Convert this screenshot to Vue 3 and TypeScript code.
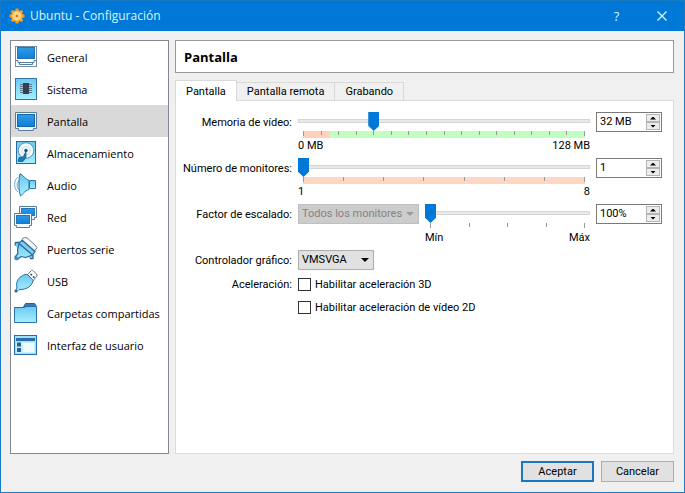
<script setup lang="ts">
import { ref } from 'vue'

interface Section {
  id: string
  label: string
}

const sections: Section[] = [
  { id: 'general', label: 'General' },
  { id: 'system', label: 'Sistema' },
  { id: 'display', label: 'Pantalla' },
  { id: 'storage', label: 'Almacenamiento' },
  { id: 'audio', label: 'Audio' },
  { id: 'network', label: 'Red' },
  { id: 'serial', label: 'Puertos serie' },
  { id: 'usb', label: 'USB' },
  { id: 'folders', label: 'Carpetas compartidas' },
  { id: 'ui', label: 'Interfaz de usuario' },
]

const tabs = ['Pantalla', 'Pantalla remota', 'Grabando']

const activeSection = ref('display')
const activeTab = ref('Pantalla')
const memory = ref(32)
const monitors = ref(1)
const scale = ref(100)
const controller = ref('VMSVGA')
const accel3d = ref(false)
const accel2d = ref(false)

function clamp(value: number, min: number, max: number): number {
  return Math.min(max, Math.max(min, value))
}
</script>

<template>
  <div class="window">
    <header class="titlebar">
      <svg class="gear" viewBox="0 0 16 16" aria-hidden="true">
        <g fill="#f59a23">
          <circle cx="8" cy="8" r="5.8" />
          <rect v-for="n in 4" :key="n" x="6.3" y="0.4" width="3.4" height="15.2" rx="1.4" :transform="`rotate(${n * 45} 8 8)`" />
        </g>
        <circle cx="8" cy="8" r="5" fill="#ffc65c" />
        <path d="M8 4v8M4 8h8M5.2 5.2l5.6 5.6M10.8 5.2l-5.6 5.6" stroke="#fff0c4" stroke-width="1" />
        <circle cx="8" cy="8" r="1.5" fill="#e8791a" />
      </svg>
      <h1>Ubuntu - Configuración</h1>
      <button type="button" class="caption" aria-label="Ayuda">?</button>
      <button type="button" class="caption" aria-label="Cerrar">
        <svg viewBox="0 0 10 10" width="10" height="10"><path d="M0.5 0.5l9 9M9.5 0.5l-9 9" stroke="#d8f6ff" stroke-width="1.3" /></svg>
      </button>
    </header>

    <div class="body">
      <nav class="sidebar">
        <button
          v-for="s in sections"
          :key="s.id"
          type="button"
          class="item"
          :class="{ selected: s.id === activeSection }"
          @click="activeSection = s.id"
        >
          <svg class="icon" viewBox="0 0 24 24" aria-hidden="true">
            <g v-if="s.id === 'general'">
              <rect x="1.5" y="1.5" width="21" height="20" fill="#fff" stroke="#6f8da5" />
              <rect x="3.5" y="2.5" width="17" height="11" fill="url(#screen)" stroke="#2375ba" />
              <path d="M2 15.5h2v2h16v-2h2M5.5 17.5v2h13v-2" fill="none" stroke="#587d9b" />
            </g>
            <g v-else-if="s.id === 'system'">
              <rect x="1.5" y="1.5" width="21" height="21" fill="url(#cyan)" stroke="#3276a8" />
              <path d="M6 7.5h12M6 9.5h12M6 11.5h12M6 13.5h12M6 15.5h12" stroke="#54788f" />
              <rect x="9" y="6" width="6" height="11" fill="#34424f" />
            </g>
            <g v-else-if="s.id === 'display'">
              <path d="M1.5 3.5h21v16h-3v2h-15v-2h-3z" fill="#e9f5ff" stroke="#587d9b" />
              <rect x="3.5" y="5.5" width="17" height="12" fill="url(#screen)" stroke="#1767a8" />
            </g>
            <g v-else-if="s.id === 'storage'">
              <rect x="2.5" y="0.5" width="19" height="22" fill="url(#cyan)" stroke="#286ba0" />
              <circle cx="12" cy="9.5" r="7.8" fill="#effbff" stroke="#5592b7" />
              <circle cx="12" cy="9.5" r="4" fill="none" stroke="#c0dbe7" stroke-width="0.8" />
              <circle cx="12" cy="9.5" r="1.7" fill="#254e72" />
              <path d="M4 20.5l1-4 4-.5 3-5.5v6l-3 4z" fill="#1977bd" stroke="#1a588b" stroke-width="0.7" />
            </g>
            <g v-else-if="s.id === 'audio'">
              <path d="M5 7.5C2.5 9 2.5 15 5 16.5M4 4C-.5 7-.5 16 4 19" fill="none" stroke="#63abc9" />
              <path d="M6 .8C9 2 10 5 15 7.5v9C10 18 9 21.5 6.5 23 4.5 18 4.5 6 6 .8z" fill="url(#cyan)" stroke="#2876aa" />
              <path d="M15.5 7.5h6v8h-6z" fill="url(#cyan)" stroke="#2876aa" />
            </g>
            <g v-else-if="s.id === 'network'">
              <path d="M5.5 1.5h17v11h-2v2h-13v-2h-2z" fill="#eef7ff" stroke="#587d9b" />
              <rect x="7.5" y="3.5" width="13" height="7" fill="url(#screen)" stroke="#2177b9" />
              <path d="M.5 8.5h17v12h-2v2h-13v-2h-2z" fill="#f5faff" stroke="#587d9b" />
              <rect x="2.5" y="10.5" width="13" height="8" fill="url(#screen)" stroke="#2177b9" />
            </g>
            <g v-else-if="s.id === 'serial'">
              <path d="M8.5 1.5Q10 .2 13 .8L21.5 8.5Q24 11 22 12.5L19.5 14 7.5 4z" fill="#f5f8fb" stroke="#6d7d89" />
              <path d="M1 8.5L1.5 5.5 5 5.5 8.5 3.5 21 14.5 19 17.5 19 21.5 16 21.5" fill="#7bcdf2" stroke="#28669a" stroke-width="1.3" stroke-linejoin="round" />
              <path d="M5 6.5L18.5 18 11.5 20.5 7 19.5 3.5 22.5 1 20 4 16.5 3.5 13z" fill="url(#cyan)" stroke="#28669a" stroke-width="1.2" stroke-linejoin="round" />
              <circle cx="2.3" cy="21.3" r="2" fill="#438fbd" />
            </g>
            <g v-else-if="s.id === 'usb'">
              <path d="M12.5 6.5l5-5q1-.5 2 .5l3 3q1 1 .5 2l-4.5 5.500z" fill="#fafafa" stroke="#6f7982" />
              <path d="M16.5 5l1.5 1.3M19 7.5l1.5 1.3" stroke="#303a44" stroke-width="1.5" />
              <path d="M11 5.5Q13 5 14 6l4.500 4.500q1 1 .3 2.500C16 19.500 10 20.500 5 20.500L3 22.500 1.500 21.500 3 19C1.500 13 4 8 11 5.500z" fill="url(#cyan)" stroke="#2871a2" />
              <circle cx="2" cy="22" r="1.600" fill="#356b91" />
            </g>
            <g v-else-if="s.id === 'folders'">
              <path d="M9.5 6l2-3.5h9l1.5 2V9H9.500z" fill="#3c78b1" stroke="#24629e" />
              <path d="M.5 6.5h9.5l2-1h10.5v16H.5z" fill="url(#cyan)" stroke="#2672a9" />
            </g>
            <g v-else>
              <rect x=".5" y="2.5" width="22" height="19" fill="#9ce3fa" stroke="#266da8" />
              <rect x="2" y="5" width="19" height="3" fill="#2c6bac" />
              <rect x="2" y="9" width="19" height="11" fill="#c5f1fe" />
              <rect x="9" y="10" width="11" height="9" fill="#effcff" />
              <path d="M3 9.5h4v4H3zM3 15h4v4H3z" fill="#2b5e96" />
            </g>
          </svg>
          <span>{{ s.label }}</span>
        </button>
      </nav>

      <main class="content">
        <h2 class="heading">Pantalla</h2>
        <div class="tabs" role="tablist">
          <button
            v-for="t in tabs"
            :key="t"
            type="button"
            role="tab"
            class="tab"
            :class="{ active: t === activeTab }"
            :aria-selected="t === activeTab"
            @click="activeTab = t"
          >{{ t }}</button>
        </div>

        <section class="pane">
          <div class="row">
            <label class="name" for="memory">Memoria de vídeo:</label>
            <div class="slider">
              <input id="memory" v-model.number="memory" type="range" min="0" max="128" />
              <div class="ticks memory"><i v-for="n in 17" :key="n" /></div>
              <div class="ends"><span>0 MB</span><span>128 MB</span></div>
            </div>
            <div class="spin">
              <input type="text" aria-label="Memoria de vídeo en MB" :value="`${memory} MB`" />
              <div class="steps">
                <button type="button" aria-label="Aumentar memoria" @click="memory = clamp(memory + 1, 0, 128)" />
                <button type="button" class="down" aria-label="Reducir memoria" @click="memory = clamp(memory - 1, 0, 128)" />
              </div>
            </div>
          </div>

          <div class="row">
            <label class="name" for="monitors">Número de monitores:</label>
            <div class="slider">
              <input id="monitors" v-model.number="monitors" type="range" min="1" max="8" />
              <div class="ticks monitors"><i v-for="n in 8" :key="n" /></div>
              <div class="ends"><span>1</span><span>8</span></div>
            </div>
            <div class="spin">
              <input type="text" aria-label="Cantidad de monitores" :value="monitors" />
              <div class="steps">
                <button type="button" aria-label="Aumentar monitores" @click="monitors = clamp(monitors + 1, 1, 8)" />
                <button type="button" class="down" aria-label="Reducir monitores" @click="monitors = clamp(monitors - 1, 1, 8)" />
              </div>
            </div>
          </div>

          <div class="row">
            <label class="name" for="scale-target">Factor de escalado:</label>
            <div class="pair">
              <div class="select disabled">
                <select id="scale-target" disabled><option>Todos los monitores</option></select>
              </div>
              <div class="slider">
                <input v-model.number="scale" type="range" min="100" max="200" aria-label="Factor de escalado" />
                <div class="ticks"><i v-for="n in 5" :key="n" /></div>
                <div class="ends"><span>Mín</span><span>Máx</span></div>
              </div>
            </div>
            <div class="spin">
              <input type="text" aria-label="Porcentaje de escalado" :value="`${scale}%`" />
              <div class="steps">
                <button type="button" aria-label="Aumentar escala" @click="scale = clamp(scale + 1, 100, 200)" />
                <button type="button" class="down" aria-label="Reducir escala" @click="scale = clamp(scale - 1, 100, 200)" />
              </div>
            </div>
          </div>

          <div class="row short">
            <label class="name" for="controller">Controlador gráfico:</label>
            <div class="select controller">
              <select id="controller" v-model="controller">
                <option>VMSVGA</option>
                <option>VBoxSVGA</option>
                <option>VBoxVGA</option>
              </select>
            </div>
          </div>

          <div class="row checks">
            <span id="accel" class="name">Aceleración:</span>
            <div class="options" role="group" aria-labelledby="accel">
              <label class="check"><input v-model="accel3d" type="checkbox" />Habilitar aceleración 3D</label>
              <label class="check"><input v-model="accel2d" type="checkbox" />Habilitar aceleración de vídeo 2D</label>
            </div>
          </div>
        </section>
      </main>
    </div>

    <footer class="actions">
      <button type="button" class="action primary">Aceptar</button>
      <button type="button" class="action">Cancelar</button>
    </footer>

    <svg class="defs" width="0" height="0" aria-hidden="true">
      <defs>
        <linearGradient id="screen" x1="0" y1="0" x2="0" y2="1">
          <stop offset="0" stop-color="#2f9be6" />
          <stop offset="1" stop-color="#0f80d6" />
        </linearGradient>
        <linearGradient id="cyan" x1="0" y1="0" x2="0" y2="1">
          <stop offset="0" stop-color="#6dc8f1" />
          <stop offset="1" stop-color="#a5efff" />
        </linearGradient>
      </defs>
    </svg>
  </div>
</template>

<style>
body {
  background: #f0f0f0;
}
</style>

<style scoped>
* {
  box-sizing: border-box;
}

.window {
  display: flex;
  flex-direction: column;
  min-height: 100vh;
  border: 1px solid #1a7ac4;
  background: #f0f0f0;
  color: #000;
  font: 11px/16px 'Open Sans', 'Noto Sans', sans-serif;
}

button,
input,
select {
  margin: 0;
  border-radius: 0;
  color: inherit;
  font: inherit;
}

.titlebar {
  display: flex;
  align-items: center;
  height: 30px;
  padding-left: 8px;
  background: #0078d7;
  color: #d8f6ff;
}

.gear {
  width: 16px;
  height: 16px;
  margin-right: 5px;
}

h1 {
  flex: 1;
  margin: 0;
  font-size: 12px;
  font-weight: 400;
}

.caption {
  display: flex;
  align-items: center;
  justify-content: center;
  width: 45px;
  height: 30px;
  padding: 0;
  border: 0;
  background: none;
  font-size: 13px;
}

.body {
  display: flex;
  flex: 1;
  gap: 6px;
  padding: 9px 10px 0 9px;
}

.sidebar {
  width: 159px;
  flex: none;
  border: 1px solid #828790;
  background: #fff;
}

.item {
  display: flex;
  align-items: center;
  gap: 9px;
  width: 100%;
  height: 32px;
  padding: 0 0 0 3px;
  border: 0;
  background: none;
  line-height: 18px;
  white-space: nowrap;
}

.item span {
  padding-top: 1px;
}

.item.selected {
  background: #d9d9d9;
}

.icon {
  flex: none;
  width: 24px;
  height: 24px;
}

.content {
  display: flex;
  flex: 1;
  flex-direction: column;
  min-width: 0;
}

.heading {
  height: 33px;
  margin: 0 0 8px;
  padding: 0 8px;
  border: 1px solid #999;
  background: #fff;
  font-size: 13px;
  font-weight: 700;
  line-height: 33px;
}

.tabs,
.pane,
.actions {
  font-family: Roboto, 'Noto Sans', sans-serif;
}

.tabs {
  display: flex;
  align-items: flex-end;
  height: 19px;
}

.tab {
  height: 18px;
  padding: 0 10px;
  border: 1px solid #d9d9d9;
  border-left-width: 0;
  border-bottom: 0;
  background: #f0f0f0;
  line-height: 17px;
}

.tab.active {
  z-index: 1;
  height: 21px;
  margin-bottom: -1px;
  border-left-width: 1px;
  background: #fff;
}

.pane {
  flex: 1;
  padding: 11px 11px 10px 4px;
  border: 1px solid #dcdcdc;
  background: #fff;
}

.row {
  display: grid;
  grid-template-columns: 112px minmax(0, 1fr) 66px;
  column-gap: 6px;
  height: 46px;
}

.row.short {
  height: 28px;
}

.name {
  height: 20px;
  line-height: 21px;
  text-align: right;
  white-space: nowrap;
}

.slider {
  flex: 1;
  min-width: 0;
}

.slider input {
  display: block;
  width: 100%;
  height: 18px;
  appearance: none;
  background: none;
}

.slider input::-webkit-slider-runnable-track {
  height: 4px;
  background: #e7eaea;
  box-shadow: inset 0 0 0 1px #d6d6d6;
}

.slider input::-webkit-slider-thumb {
  width: 11px;
  height: 19px;
  margin-top: -7px;
  appearance: none;
  background: #0078d7;
  clip-path: polygon(0 0, 100% 0, 100% 72%, 50% 100%, 0 72%);
}

.ticks {
  display: flex;
  justify-content: space-between;
  height: 7px;
  margin: 1px 5px 0;
}

.ticks i {
  width: 1px;
  height: 4px;
  background: #9a9a9a;
}

.ticks i:first-child,
.ticks i:last-child {
  height: 5px;
}

.ticks.memory {
  background: linear-gradient(to right, #ffd0bd 9%, #c0ffc0 10%);
}

.ticks.monitors {
  background: #ffd5c3;
}

.ends {
  display: flex;
  justify-content: space-between;
}

.spin {
  display: flex;
  height: 20px;
  padding: 1px;
  border: 1px solid #7a7a7a;
}

.spin input {
  flex: 1;
  min-width: 0;
  padding: 0 0 0 2px;
  border: 0;
  background: none;
}

.steps {
  display: flex;
  flex-direction: column;
  width: 14px;
}

.steps button {
  display: flex;
  flex: 1;
  align-items: center;
  justify-content: center;
  min-height: 0;
  padding: 0;
  border: 1px solid #b5b5b5;
  background: #ececec;
}

.steps button::before {
  width: 6px;
  height: 3px;
  background: #000;
  clip-path: polygon(50% 0, 100% 100%, 0 100%);
  content: '';
}

.steps .down::before {
  clip-path: polygon(0 0, 100% 0, 50% 100%);
}

.pair {
  display: flex;
  gap: 6px;
}

.select {
  position: relative;
  width: 121px;
  height: 20px;
}

.select.controller {
  width: 76px;
}

.select select {
  width: 100%;
  height: 100%;
  padding: 0 0 0 3px;
  border: 1px solid #adadad;
  appearance: none;
  background: #e1e1e1;
}

.select::after {
  position: absolute;
  top: 8px;
  right: 5px;
  width: 8px;
  height: 4px;
  background: #000;
  clip-path: polygon(0 0, 100% 0, 50% 100%);
  content: '';
  pointer-events: none;
}

.select.disabled select {
  border-color: #bfbfbf;
  background: #ccc;
  color: #838383;
  opacity: 1;
}

.select.disabled::after {
  background: #9a9a9a;
}

.row.checks {
  height: auto;
}

.checks .name {
  height: 13px;
  line-height: 13px;
}

.options {
  display: flex;
  flex-direction: column;
  gap: 10px;
}

.check {
  display: flex;
  align-items: center;
  gap: 4px;
  height: 13px;
  white-space: nowrap;
}

.check input {
  width: 13px;
  height: 13px;
  border: 1px solid #333;
  appearance: none;
  background: #fff;
}

.check input:checked {
  background: #0078d7;
  box-shadow: inset 0 0 0 2px #fff;
}

.actions {
  display: flex;
  justify-content: flex-end;
  gap: 7px;
  padding: 7px 10px 10px;
}

.action {
  width: 73px;
  height: 21px;
  padding: 0;
  border: 1px solid #adadad;
  background: #e1e1e1;
  line-height: 16px;
}

.action.primary {
  border: 2px solid #1a78c0;
}

.defs {
  position: absolute;
}
</style>
